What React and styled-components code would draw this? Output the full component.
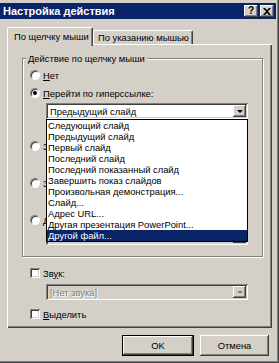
import React from "react";
import styled, { createGlobalStyle } from "styled-components";

const GlobalStyle = createGlobalStyle`
  html, body {
    margin: 0;
    padding: 0;
    background: #d4d0c8;
  }
  body {
    font-family: "Liberation Sans", Arial, sans-serif;
    font-size: 9.4px;
    color: #000;
  }
`;

const raised = `
  box-shadow: inset -1px -1px #404040, inset 1px 1px #fff,
    inset -2px -2px #808080, inset 2px 2px #d4d0c8;
`;

const sunken = `
  box-shadow: inset 1px 1px #808080, inset -1px -1px #fff,
    inset 2px 2px #404040, inset -2px -2px #d4d0c8;
`;

const Window = styled.div`
  width: 279px;
  height: 363px;
  box-sizing: border-box;
  background: #d4d0c8;
  padding: 3px 3px 3px 0;
  box-shadow: inset -1px -1px #404040, inset -2px -2px #808080;
  display: flex;
  flex-direction: column;
`;

const TitleBar = styled.div`
  height: 16px;
  background: #0a246a;
  color: #fff;
  display: flex;
  align-items: center;
  padding: 0 2px 0 3px;
`;

const TitleText = styled.span`
  flex: 1;
  font-weight: bold;
  font-size: 11px;
  white-space: nowrap;
`;

const CaptionButton = styled.div`
  width: 14px;
  height: 12px;
  margin-left: 2px;
  background: #d4d0c8;
  ${raised}
  display: flex;
  align-items: center;
  justify-content: center;
  font-weight: bold;
  font-size: 10px;
  color: #000;
  line-height: 1;
`;

const TabStrip = styled.div`
  display: flex;
  align-items: flex-end;
  height: 17px;
  margin: 8px 0 0 7px;
  position: relative;
  z-index: 1;
`;

const Tab = styled.div`
  width: ${(p) => p.$w}px;
  height: ${(p) => (p.$active ? 19 : 14)}px;
  margin-bottom: ${(p) => (p.$active ? -2 : 0)}px;
  box-sizing: border-box;
  background: #d4d0c8;
  border-top: 1px solid #fff;
  border-left: 1px solid #fff;
  border-right: 1px solid #404040;
  border-radius: 2px 2px 0 0;
  box-shadow: inset -1px 0 #808080;
  padding: ${(p) => (p.$active ? "3px 0 0 6px" : "1px 0 0 4px")};
  white-space: nowrap;
  line-height: 12px;
`;

const Panel = styled.div`
  height: 284px;
  margin: 0 4px 0 7px;
  box-sizing: border-box;
  box-shadow: inset 1px 1px #fff, inset -1px -1px #404040, inset -2px -2px #808080;
  padding: 8px 0 0 15px;
  display: flex;
  flex-direction: column;
`;

const Group = styled.fieldset`
  margin: 0;
  padding: 0;
  width: 241px;
  box-sizing: border-box;
  border: 1px solid #808080;
  box-shadow: 1px 1px #fff, inset 1px 1px #fff;
  min-width: 0;
`;

const Legend = styled.legend`
  margin-left: 3px;
  padding: 0 2px;
  line-height: 13px;
  background: #d4d0c8;
`;

const GroupBody = styled.div`
  padding: 3px 0 11px 7px;
  display: flex;
  flex-direction: column;
`;

const OptionRow = styled.div`
  display: flex;
  align-items: center;
  gap: 3px;
  height: 14px;
  margin-top: ${(p) => p.$top || 0}px;
  margin-left: ${(p) => p.$left || 0}px;
  white-space: nowrap;
`;

const Radio = styled.span`
  width: 10px;
  height: 10px;
  flex: none;
  box-sizing: border-box;
  border-radius: 50%;
  background: #fff;
  border: 1px solid;
  border-color: #808080 #fff #fff #808080;
  box-shadow: inset 1px 1px #404040;
  display: flex;
  align-items: center;
  justify-content: center;
  &::after {
    content: "";
    width: 4px;
    height: 4px;
    border-radius: 50%;
    background: ${(p) => (p.$checked ? "#000" : "transparent")};
  }
`;

const Check = styled.span`
  width: 10px;
  height: 10px;
  flex: none;
  background: #fff;
  ${sunken}
`;

const Key = styled.u`
  text-decoration-thickness: 1px;
  text-underline-offset: 1px;
`;

const ComboWrap = styled.div`
  position: relative;
  width: 202px;
  margin-top: ${(p) => p.$top || 0}px;
  margin-left: ${(p) => p.$left || 0}px;
`;

const Combo = styled.div`
  height: 16px;
  box-sizing: border-box;
  padding: 2px;
  background: ${(p) => (p.$disabled ? "#d4d0c8" : "#fff")};
  color: ${(p) => (p.$disabled ? "#808080" : "#000")};
  ${sunken}
  display: flex;
  align-items: center;
`;

const ComboText = styled.span`
  flex: 1;
  padding-left: 2px;
  white-space: nowrap;
  text-shadow: ${(p) => (p.$disabled ? "1px 1px #fff" : "none")};
`;

const DropButton = styled.span`
  width: 13px;
  height: 12px;
  background: #d4d0c8;
  ${raised}
  display: flex;
  align-items: center;
  justify-content: center;
`;

const Arrow = styled.span`
  width: 0;
  height: 0;
  border-left: 3px solid transparent;
  border-right: 3px solid transparent;
  border-top: 3px solid ${(p) => (p.$disabled ? "#808080" : "#000")};
  margin-top: 1px;
`;

const DropList = styled.ul`
  position: absolute;
  top: 100%;
  left: 0;
  width: 202px;
  box-sizing: border-box;
  margin: 0;
  padding: 0;
  list-style: none;
  background: #fff;
  border: 1px solid #000;
  z-index: 2;
`;

const ListItem = styled.li`
  height: 11px;
  line-height: 11px;
  padding-left: 1px;
  white-space: nowrap;
  background: ${(p) => (p.$selected ? "#0a246a" : "transparent")};
  color: ${(p) => (p.$selected ? "#fff" : "#000")};
`;

const ButtonRow = styled.div`
  display: flex;
  justify-content: flex-end;
  gap: 6px;
  margin-top: 7px;
  padding-right: 7px;
`;

const Button = styled.div`
  width: ${(p) => p.$w}px;
  height: 21px;
  box-sizing: border-box;
  background: #d4d0c8;
  display: flex;
  align-items: center;
  justify-content: center;
  ${(p) =>
    p.$default
      ? `border: 1px solid #000;
         box-shadow: inset -1px -1px #404040, inset 1px 1px #fff, inset -2px -2px #808080;`
      : `box-shadow: inset -1px -1px #404040, inset 1px 1px #fff, inset -2px -2px #808080, inset 2px 2px #d4d0c8;`}
`;

const slides = [
  "Следующий слайд",
  "Предыдущий слайд",
  "Первый слайд",
  "Последний слайд",
  "Последний показанный слайд",
  "Завершить показ слайдов",
  "Произвольная демонстрация...",
  "Слайд...",
  "Адрес URL...",
  "Другая презентация PowerPoint...",
  "Другой файл...",
];

const hiddenOptions = ["Запуск программы:", "Запуск макроса:", "Действие объекта:"];

const CloseIcon = () => (
  <svg width="8" height="7" viewBox="0 0 8 7">
    <path d="M0 0h2l2 2 2-2h2L5 3.5 8 7H6L4 5 2 7H0l3-3.5z" fill="#000" />
  </svg>
);

export default function App() {
  return (
    <>
      <GlobalStyle />
      <Window>
        <TitleBar>
          <TitleText>Настройка действия</TitleText>
          <CaptionButton>?</CaptionButton>
          <CaptionButton>
            <CloseIcon />
          </CaptionButton>
        </TitleBar>

        <TabStrip>
          <Tab $active $w={86}>По щелчку мыши</Tab>
          <Tab $w={100}>По указанию мышью</Tab>
        </TabStrip>

        <Panel>
          <Group>
            <Legend>Действие по щелчку мыши</Legend>
            <GroupBody>
              <OptionRow>
                <Radio />
                <span>
                  <Key>Н</Key>ет
                </span>
              </OptionRow>
              <OptionRow $top={4}>
                <Radio $checked />
                <span>
                  <Key>П</Key>ерейти по гиперссылке:
                </span>
              </OptionRow>
              <ComboWrap $top={3} $left={16}>
                <Combo>
                  <ComboText>Предыдущий слайд</ComboText>
                  <DropButton>
                    <Arrow />
                  </DropButton>
                </Combo>
                <DropList>
                  {slides.map((s, i) => (
                    <ListItem key={s} $selected={i === slides.length - 1}>
                      {s}
                    </ListItem>
                  ))}
                </DropList>
              </ComboWrap>
              {hiddenOptions.map((label, i) => (
                <React.Fragment key={label}>
                  <OptionRow $top={i === 0 ? 20 : 5}>
                    <Radio />
                    <span>{label}</span>
                  </OptionRow>
                  <ComboWrap $top={2} $left={16}>
                    <Combo $disabled>
                      <ComboText $disabled></ComboText>
                      <DropButton>
                        <Arrow $disabled />
                      </DropButton>
                    </Combo>
                  </ComboWrap>
                </React.Fragment>
              ))}
            </GroupBody>
          </Group>

          <OptionRow $top={9} $left={8}>
            <Check />
            <span>
              Зв<Key>у</Key>к:
            </span>
          </OptionRow>
          <ComboWrap $top={4} $left={24}>
            <Combo $disabled>
              <ComboText $disabled>[Нет звука]</ComboText>
              <DropButton>
                <Arrow $disabled />
              </DropButton>
            </Combo>
          </ComboWrap>
          <OptionRow $top={7} $left={8}>
            <Check />
            <span>
              <Key>В</Key>ыделить
            </span>
          </OptionRow>
        </Panel>

        <ButtonRow>
          <Button $default $w={72}>OK</Button>
          <Button $w={69}>Отмена</Button>
        </ButtonRow>
      </Window>
    </>
  );
}
